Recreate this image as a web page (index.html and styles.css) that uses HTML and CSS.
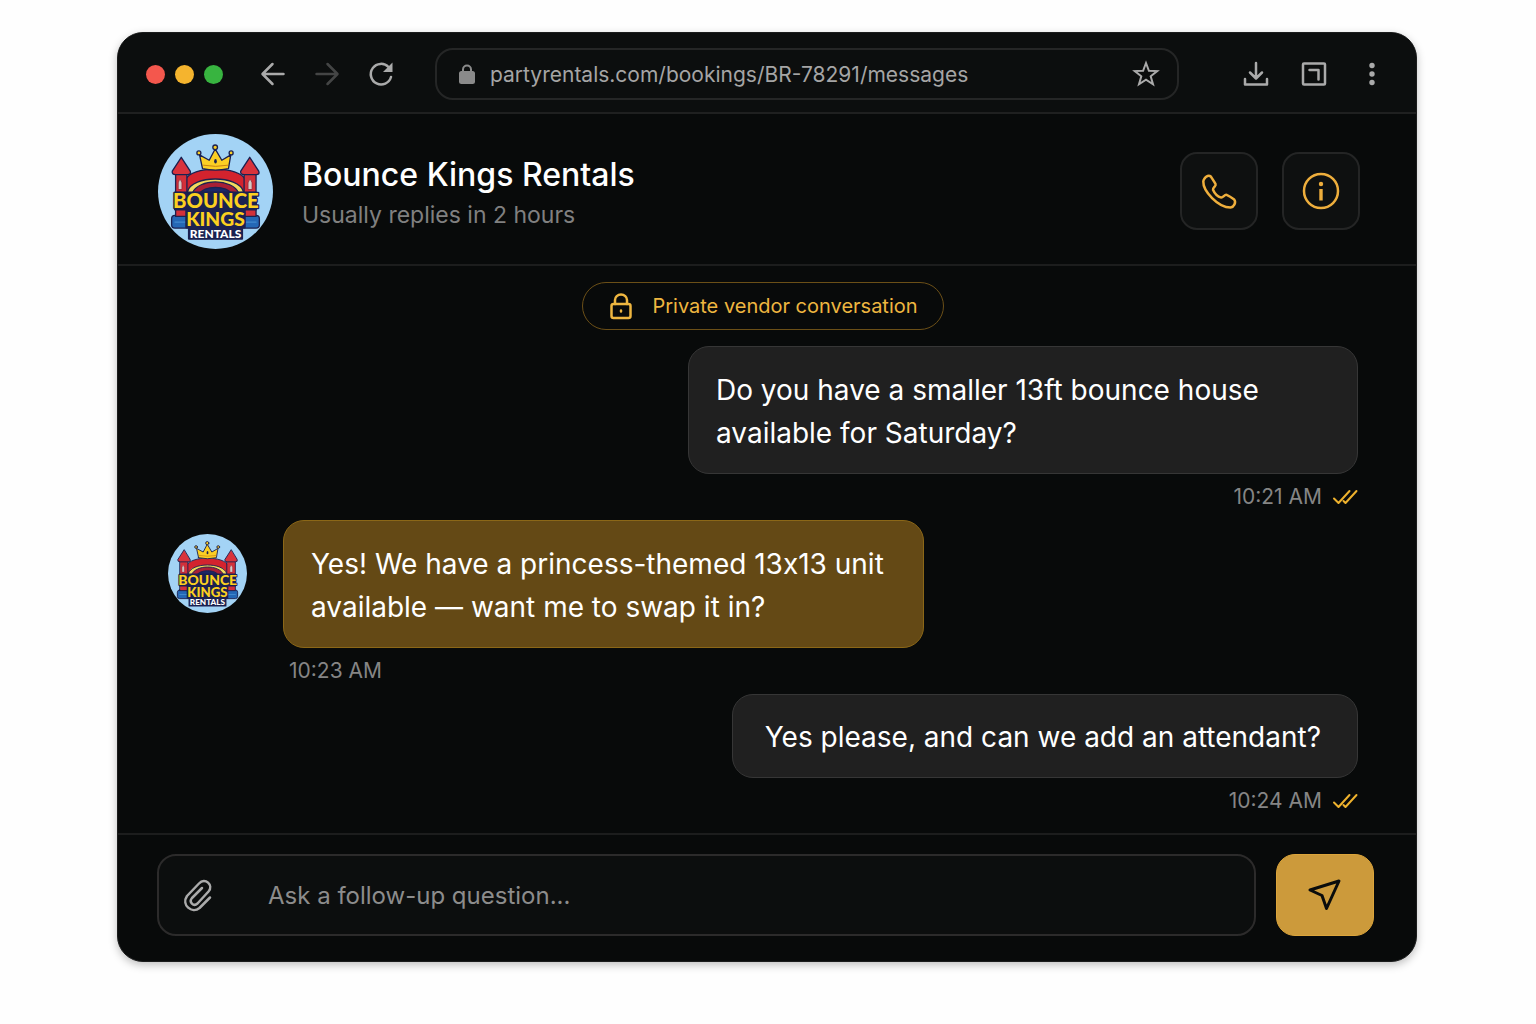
FILE: index.html
```html
<!DOCTYPE html>
<html lang="en">
<head>
  <meta charset="UTF-8">
  <meta name="viewport" content="width=device-width, initial-scale=1.0">
  <title>Bounce Kings Rentals - Messages</title>
  <link rel="stylesheet" href="styles.css">
</head>
<body>
  <div class="window">
    <div class="browser-bar">
      <div class="dots">
        <span class="dot red"></span>
        <span class="dot yellow"></span>
        <span class="dot green"></span>
      </div>
      <div class="nav-buttons">
        <button class="icon-button" aria-label="Back">
          <svg width="26" height="26" viewBox="0 0 26 26"><path d="M12.500 3L2.500 13L12.500 23M3 13H23.500"/></svg>
        </button>
        <button class="icon-button" aria-label="Forward" disabled>
          <svg width="26" height="26" viewBox="0 0 26 26"><path d="M13.500 3L23.500 13L13.500 23M23 13H2.500"/></svg>
        </button>
        <button class="icon-button" aria-label="Reload">
          <svg width="26" height="26" viewBox="0 0 26 26"><path d="M23 16A10.300 10.300 0 1 1 20.500 6L22 8"/><path d="M24.500 1.500V11H15Z" fill="currentColor" stroke="none"/></svg>
        </button>
      </div>
      <div class="address">
        <svg class="address-lock" width="18" height="22" viewBox="0 0 18 22"><rect x="2" y="9" width="14" height="11" rx="1.500" fill="currentColor"/><path d="M5 10V6.500A4 4 0 0 1 13 6.500V10"/></svg>
        <input class="address-input" type="text" aria-label="Address" value="partyrentals.com/bookings/BR-78291/messages">
        <button class="icon-button" aria-label="Bookmark">
          <svg width="28" height="28" viewBox="0 0 28 28"><path class="thin" d="M14 3L16.900 10.800L25.200 11.100L18.700 16.300L21 24.300L14 19.700L7 24.300L9.300 16.300L2.800 11.100L11.100 10.800Z"/></svg>
        </button>
      </div>
      <div class="tool-buttons">
        <button class="icon-button" aria-label="Downloads">
          <svg width="26" height="26" viewBox="0 0 26 26"><path d="M13 2V17M7 11.500L13 17.500L19 11.500M2 18V23.500H24V18"/></svg>
        </button>
        <button class="icon-button" aria-label="Side panel">
          <svg width="26" height="26" viewBox="0 0 26 26"><rect x="2" y="2.500" width="22" height="21" rx="1"/><path d="M8.500 9H17.500V18.500"/></svg>
        </button>
        <button class="icon-button" aria-label="Menu">
          <svg width="26" height="26" viewBox="0 0 26 26"><g fill="currentColor" stroke="none"><circle cx="13" cy="4.500" r="2.700"/><circle cx="13" cy="13" r="2.700"/><circle cx="13" cy="21.500" r="2.700"/></g></svg>
        </button>
      </div>
    </div>

    <div class="header">
      <svg class="logo" viewBox="23 27 346 346" role="img" aria-label="Bounce Kings Rentals">
        <g id="logo-art">
          <circle cx="196" cy="200" r="173" fill="#a3d3f5" stroke="none"/>
          <g stroke="#1b2150" stroke-width="4">
            <rect x="64" y="272" width="264" height="38" rx="10" fill="#2467b5"/>
            <path d="M106 275V165C120 122 270 122 286 165V275Z" fill="#d3232e"/>
            <path d="M112 200C125 150 265 150 280 200V275H112Z" fill="#f3d95c"/>
            <path d="M126 205C145 160 247 160 266 205V275H126Z" fill="#a91f35"/>
            <path d="M146 210C160 180 232 180 246 210V275H146Z" fill="#1a2767"/>
            <rect x="76" y="138" width="34" height="137" fill="#d3303a"/>
            <rect x="282" y="138" width="36" height="137" fill="#d3303a"/>
            <path d="M93 97L66 139Q64 149 76 149H111Q124 149 120 139Z" fill="#d9333c"/>
            <path d="M299 97L272 139Q270 149 282 149H318Q330 149 326 139Z" fill="#d9333c"/>
            <path d="M157 131L148 90L177 106L195 72L215 106L242 90L235 131Q196 140 157 131Z" fill="#fbcf24"/>
            <circle cx="146" cy="84" r="6" fill="#fbcf24"/>
            <circle cx="195" cy="67" r="7" fill="#fbcf24"/>
            <circle cx="243" cy="84" r="6" fill="#fbcf24"/>
          </g>
          <path d="M160 121Q196 128 233 121" stroke="#c98312" stroke-width="3"/>
          <ellipse cx="196" cy="109" rx="4" ry="7" fill="#1b2150" stroke="none"/>
          <path d="M84 193V174Q89 154 95 174V193Z M294 193V174Q300 154 306 174V193Z" fill="#d5c8c5" stroke="#8e1f33" stroke-width="2"/>
          <path d="M74 292H106M288 292H318" stroke="#55a0df" stroke-width="4" opacity=".6"/>
          <!-- navy backing behind the lettering -->
          <path d="M74 203H318V254H284V308H276V342H116V308H108V254H74Z" fill="#1b2150" stroke="#1b2150" stroke-width="6"/>
          <g class="logo-text">
            <text x="197" y="251" font-size="61" fill="#fbd01f">BOUNCE</text>
            <text x="196" y="303" font-size="58" fill="#fbd01f">KINGS</text>
            <text x="196" y="340" font-size="36" fill="#ffffff">RENTALS</text>
          </g>
        </g>
      </svg>
      <div class="vendor">
        <h1 class="vendor-name">Bounce Kings Rentals</h1>
        <div class="vendor-status">Usually replies in 2 hours</div>
      </div>
      <div class="header-actions">
        <button class="square-button" aria-label="Call">
          <svg width="40" height="40" viewBox="0 0 40 40"><path d="M5.500 7.500C7 5 10 4 11.800 5.500C13.600 8 14.800 10.400 16.600 13.200C17.400 15 13.600 16.600 14 18.700C15.600 22.500 18.600 25.600 22.300 26.600C24.400 26.600 25.600 23.200 27.600 23.900C30.200 25 32.600 26.600 35.200 28.600C37.400 31.400 35 36 31.500 36.500C19 36.500 4 20 4.300 10.500C4.300 9.200 4.800 8.400 5.500 7.500Z"/></svg>
        </button>
        <button class="square-button" aria-label="Info">
          <svg width="40" height="40" viewBox="0 0 40 40"><circle cx="20" cy="20" r="17"/><path class="thick" d="M20 18V29.500"/><circle cx="20" cy="13" r="2.200" fill="currentColor" stroke="none"/></svg>
        </button>
      </div>
    </div>

    <div class="chat">
      <div class="private-pill">
        <svg width="26" height="28" viewBox="0 0 26 28"><rect x="3.500" y="12" width="19" height="14" rx="2"/><path d="M7 12V8A6 5.500 0 0 1 19 8V12M13 18.500V19.500"/></svg>
        Private vendor conversation
      </div>

      <div class="message sent">
        <div class="bubble long">Do you have a smaller 13ft bounce house available for Saturday?</div>
        <div class="time">10:21 AM
          <svg width="26" height="18" viewBox="0 0 26 18"><path d="M2 10.500L6.500 15L17.500 3M11.500 13L13.500 15L24.500 3"/></svg>
        </div>
      </div>

      <div class="message received">
        <svg class="avatar" viewBox="23 27 346 346" role="img" aria-label="Bounce Kings Rentals"><use href="#logo-art"/></svg>
        <div class="message-body">
          <div class="bubble long">Yes! We have a princess-themed 13x13 unit available — want me to swap it in?</div>
          <div class="time">10:23 AM</div>
        </div>
      </div>

      <div class="message sent">
        <div class="bubble">Yes please, and can we add an attendant?</div>
        <div class="time">10:24 AM
          <svg width="26" height="18" viewBox="0 0 26 18"><path d="M2 10.500L6.500 15L17.500 3M11.500 13L13.500 15L24.500 3"/></svg>
        </div>
      </div>
    </div>

    <form class="composer">
      <div class="input-wrap">
        <button class="icon-button" type="button" aria-label="Attach file">
          <svg width="32" height="36" viewBox="0 0 32 36"><path d="M28 20.500L17.500 31C10 37 -1 28 5 19L17 6.500C23 0 32 8 26.500 14.500L15.500 26.500C11.500 30 6.500 25 10 21L20 11"/></svg>
        </button>
        <input class="message-input" type="text" aria-label="Message" placeholder="Ask a follow-up question...">
      </div>
      <button class="send-button" type="button" aria-label="Send">
        <svg width="38" height="38" viewBox="0 0 38 38"><path d="M33 5L4 14L16 19.500L20.500 32.500Z"/></svg>
      </button>
    </form>
  </div>
</body>
</html>
```

FILE: styles.css
```css
* {
  box-sizing: border-box;
}

body {
  font-family: 'Inter', 'Liberation Sans', sans-serif;
  background-color: #fefefe;
  margin: 0;
  padding: 32px 25px 32px 23px;
  color: #ffffff;
}

button,
input {
  font-family: inherit;
  border: none;
  background: none;
  padding: 0;
  margin: 0;
}

button {
  cursor: pointer;
}

svg {
  display: block;
  flex-shrink: 0;
  fill: none;
  stroke: currentColor;
  stroke-width: 2.5;
  stroke-linecap: round;
  stroke-linejoin: round;
}

.window {
  max-width: 1300px;
  margin: 0 auto;
  background-color: #080a0a;
  border: 1px solid #1b1c1c;
  border-radius: 26px;
  box-shadow: 0 3px 8px rgba(0, 0, 0, 0.25);
  overflow: hidden;
}

/* Browser bar */
.browser-bar {
  display: flex;
  align-items: center;
  padding: 15px 31px 12px 28px;
  background-color: #0c0e0e;
  border-bottom: 2px solid #1f2020;
}

.dots {
  display: flex;
  gap: 10px;
  margin-right: 37px;
}

.dot {
  width: 19px;
  height: 19px;
  border-radius: 50%;
}

.red {
  background-color: #f4574d;
}

.yellow {
  background-color: #f5b42e;
}

.green {
  background-color: #38b440;
}

.nav-buttons {
  display: flex;
  gap: 28px;
  margin-right: 41px;
}

.icon-button {
  color: #aaaaaa;
}

.icon-button:disabled {
  color: #444545;
}

.address {
  flex: 1;
  display: flex;
  align-items: center;
  height: 52px;
  padding: 0 17px 0 21px;
  border: 2px solid #252626;
  border-radius: 18px;
}

.address-lock {
  color: #8a8a8a;
  margin-right: 14px;
  stroke-width: 2;
}

.address-input {
  flex: 1;
  min-width: 0;
  font-size: 21px;
  color: #a5a5a5;
  outline: none;
}

.thin {
  stroke-width: 2;
  stroke-linejoin: miter;
}

.tool-buttons {
  display: flex;
  gap: 32px;
  margin-left: 64px;
}

/* Vendor header */
.header {
  display: flex;
  align-items: center;
  height: 152px;
  padding: 4px 56px 0 40px;
  border-bottom: 2px solid #1c1d1d;
}

.logo {
  width: 115px;
  height: 115px;
}

.logo-text {
  font-family: 'Lato', sans-serif;
  font-weight: 900;
  text-anchor: middle;
  stroke: #1b2150;
  stroke-width: 8px;
  paint-order: stroke;
}

.vendor {
  flex: 1;
  margin-left: 29px;
  padding-top: 8px;
}

.vendor-name {
  margin: 0;
  font-size: 32px;
  font-weight: 500;
  line-height: 40px;
}

.vendor-status {
  font-size: 23px;
  line-height: 40px;
  color: #808080;
}

.header-actions {
  display: flex;
  gap: 24px;
}

.square-button {
  display: flex;
  align-items: center;
  justify-content: center;
  width: 78px;
  height: 78px;
  background-color: #0e1010;
  border: 2px solid #242525;
  border-radius: 17px;
  color: #eeae3c;
}

.thick {
  stroke-width: 3.4;
  stroke-linecap: butt;
}

/* Conversation */
.chat {
  display: flex;
  flex-direction: column;
  padding: 16px 58px 15px 50px;
}

.private-pill {
  display: flex;
  align-items: center;
  align-self: center;
  gap: 18px;
  height: 48px;
  margin-bottom: 16px;
  padding: 0 25px;
  border: 1px solid #6b4f17;
  border-radius: 24px;
  font-size: 20px;
  color: #eeb640;
}

.message {
  display: flex;
  margin-bottom: 6px;
}

.message:last-child {
  margin-bottom: 0;
}

.sent {
  flex-direction: column;
  align-items: flex-end;
}

.bubble {
  padding: 21px 36px 18px 32px;
  border: 1px solid #363636;
  border-radius: 21px;
  background-color: #202020;
  font-size: 28px;
  line-height: 43px;
  font-variant-ligatures: no-contextual;
}

.long {
  max-width: 670px;
  padding: 22px 27px 18px;
}

.received {
  align-items: flex-start;
}

.received .bubble {
  max-width: 641px;
  background-color: #644915;
  border-color: #8b6717;
}

.avatar {
  width: 79px;
  height: 79px;
  margin: 14px 36px 0 0;
}

.time {
  display: flex;
  align-items: center;
  gap: 10px;
  height: 40px;
  padding-top: 5px;
  font-size: 21px;
  color: #858585;
}

.time svg {
  color: #edb12d;
  stroke-width: 2;
}

.received .time {
  padding-left: 6px;
}

/* Composer */
.composer {
  display: flex;
  gap: 20px;
  padding: 19px 42px 25px 39px;
  border-top: 2px solid #1c1d1d;
}

.input-wrap {
  flex: 1;
  display: flex;
  align-items: center;
  gap: 54px;
  height: 82px;
  padding: 0 23px;
  background-color: #0c0e0e;
  border: 2px solid #2c2b2b;
  border-radius: 19px;
}

.message-input {
  flex: 1;
  min-width: 0;
  font-size: 24px;
  color: #ffffff;
  outline: none;
}

.message-input::placeholder {
  color: #8c8c8c;
  opacity: 1;
}

.send-button {
  display: flex;
  align-items: center;
  justify-content: center;
  width: 98px;
  height: 82px;
  background-color: #cc9a3b;
  border: 1px solid #dca53b;
  border-radius: 19px;
  color: #0a0c0c;
}

.send-button svg {
  stroke-width: 3;
}
```
